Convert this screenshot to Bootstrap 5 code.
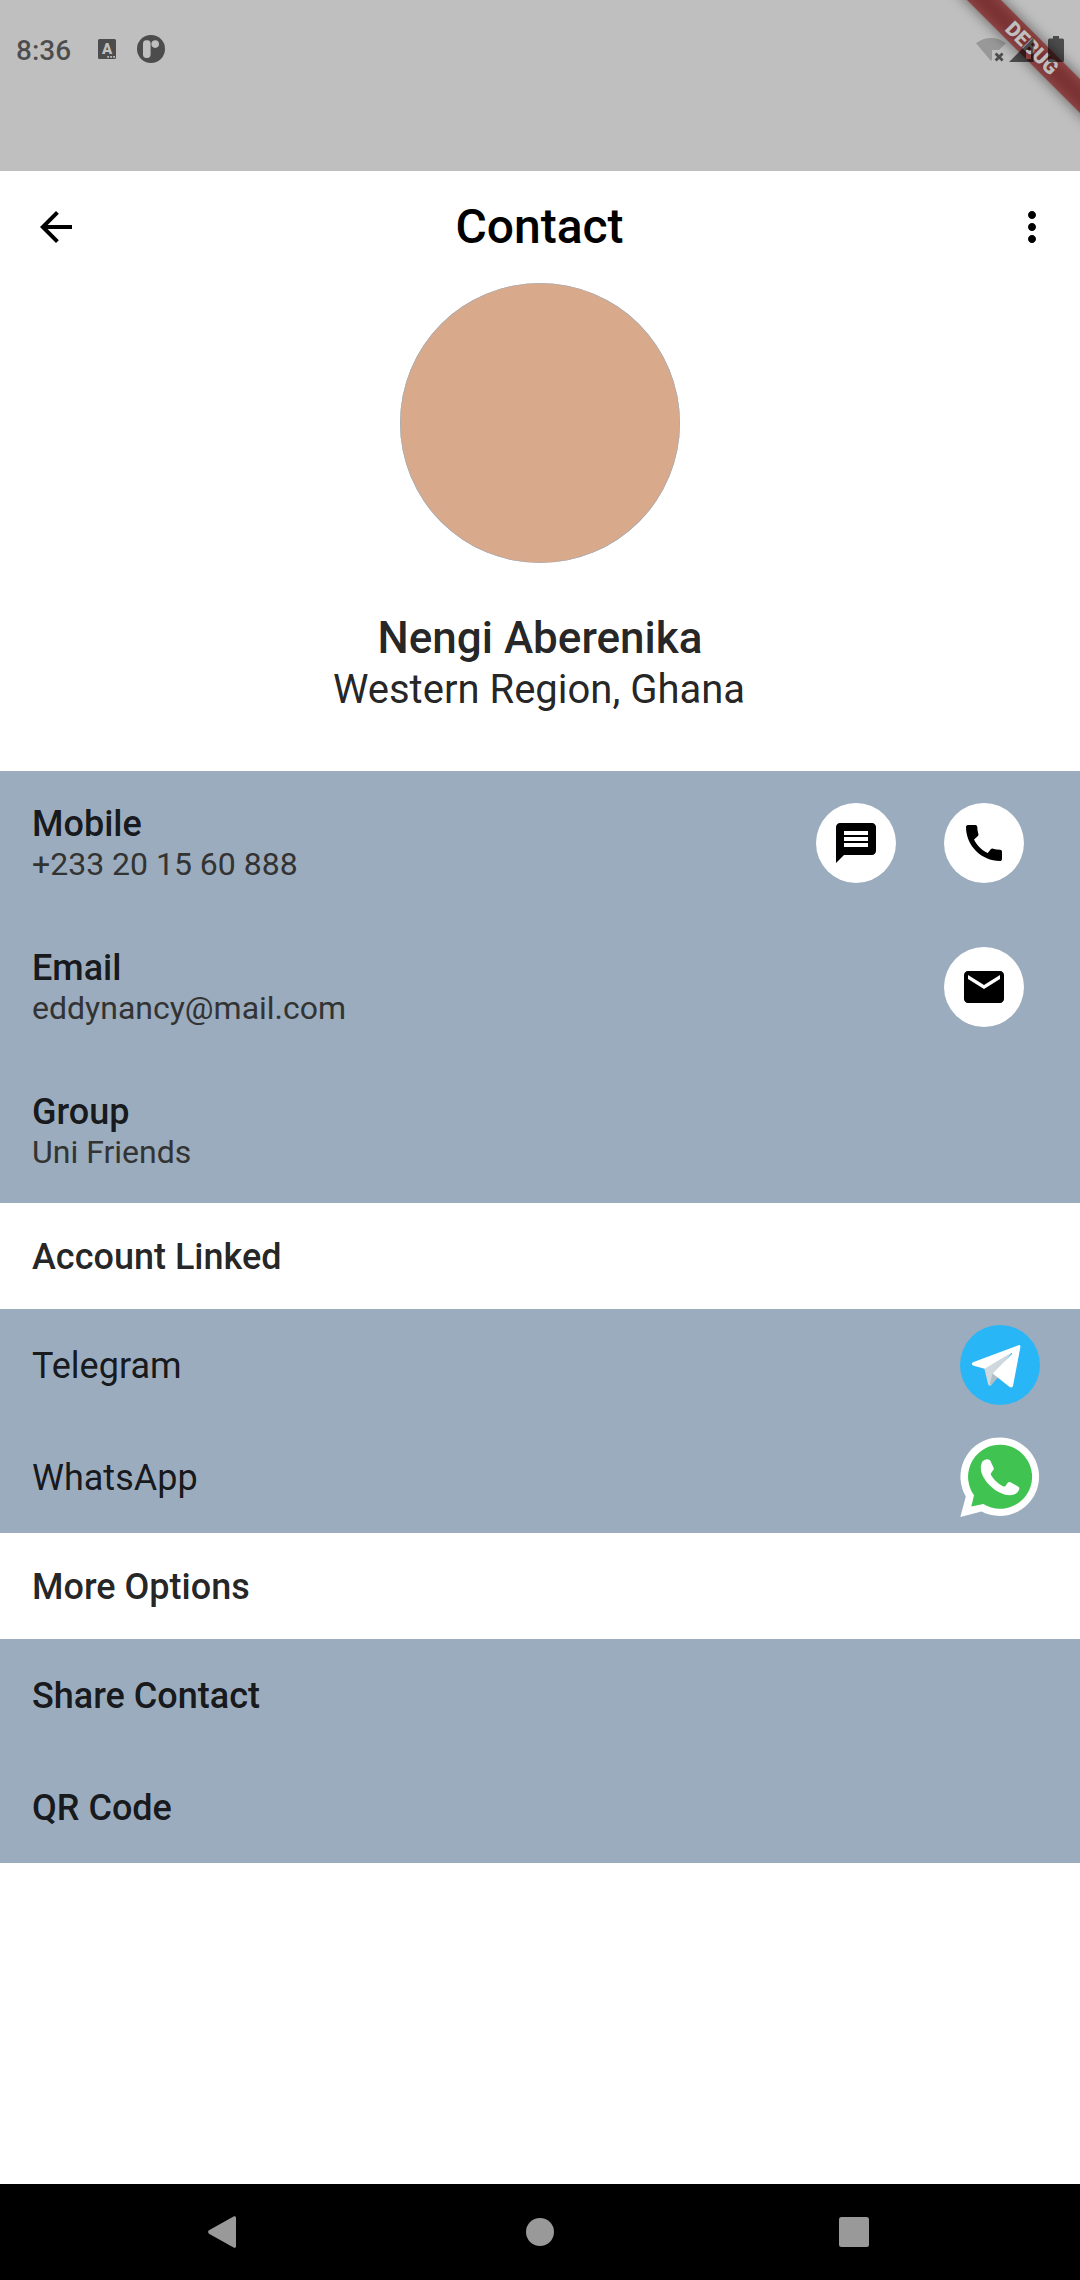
<!DOCTYPE html>
<html lang="en">
<head>
<meta charset="utf-8">
<meta name="viewport" content="width=device-width, initial-scale=1">
<title>Contact</title>
<link href="https://cdn.jsdelivr.net/npm/bootstrap@5.3.0/dist/css/bootstrap.min.css" rel="stylesheet">
<style>
  body { font-family: Roboto, "Liberation Sans", sans-serif; line-height: normal; color: rgba(0,0,0,.87); background: #fff; }
  svg { display: block; flex: none; }
  .screen { width: 1080px; height: 2280px; }
  .status-area { height: 171px; background: #fff; }
  .scrim { background: rgba(0,0,0,.25); }
  .ribbon-shade, .debug-ribbon { width: 160px; height: 24px; left: 952px; top: 36px; transform: rotate(45deg); }
  .ribbon-shade { background: rgba(0,0,0,.5); filter: blur(7px); width: 190px; left: 937px; }
  .debug-ribbon { background: rgba(183,28,28,.627); color: #fff; font-size: 20.4px; font-weight: 900; line-height: 24px; }
  .status-icons { height: 98px; padding: 0 16px; z-index: 2; color: rgba(0,0,0,.6); }
  .clock { font-size: 28px; font-weight: 500; width: 82px; padding-top: 2px; }
  .app-bar { height: 112px; padding: 0 24px 0 32px; color: #000; }
  .app-title { font-size: 48px; margin-right: 9px; padding-bottom: 2px; }
  .avatar { width: 280px; height: 280px; background: #d9a98c; box-shadow: inset 0 0 0 .6px #9aacbc; }
  .profile { height: 488px; }
  .person { font-size: 44px; line-height: 52px; margin-top: 49px; }
  .place { font-size: 40px; line-height: 47px; margin-top: 2px; padding-right: 2px; }
  .panel { background: #9aacbd; }
  .info-row { height: 144px; padding: 32px 56px 32px 32px; }
  .item-row { height: 112px; padding: 0 40px 0 32px; font-size: 36px; line-height: 42px; }
  .item-row span { padding-top: 2px; }
  .section-head { height: 106px; padding: 2px 32px 0; font-size: 36px; line-height: 42px; }
  .info-label { font-size: 36px; line-height: 42px; }
  .info-value { font-size: 32px; line-height: 38px; color: #333; }
  .round-btn { width: 80px; height: 80px; color: #000; }
  .actions { gap: 48px; }
  .medium { font-weight: 500; }
  .logo { filter: blur(.5px); }
  .notif-gap { margin-left: 21px; }
  .system-nav { height: 96px; padding: 0 211px 0 208px; background: #000; color: #999; }
</style>
</head>
<body>
<div class="screen d-flex flex-column overflow-hidden">

  <header class="status-area position-relative overflow-hidden">
    <div class="ribbon-shade position-absolute"></div>
    <div class="debug-ribbon position-absolute text-center">DEBUG</div>
    <div class="scrim position-absolute top-0 start-0 w-100 h-100"></div>
    <div class="status-icons position-relative d-flex align-items-center">
      <div class="clock">8:36</div>
      <svg width="18" height="20" viewBox="0 0 18 20"><rect width="18" height="20" rx="1.5" fill="#4c4c4c"/><text x="9" y="15" text-anchor="middle" font-family="Roboto" font-size="15" font-weight="900" fill="#bfbfbf">A</text><path d="M9.3 17h1.8v1.8H9.3zM12.3 17h1.8v1.8h-1.8zM15.2 17H17v1.8h-1.8z" fill="#bfbfbf"/></svg>
      <svg class="notif-gap" width="28" height="28" viewBox="0 0 28 28"><circle cx="14" cy="14" r="14" fill="#4c4c4c"/><rect x="6" y="5.3" width="7.6" height="17.7" rx="3.4" fill="#bfbfbf"/><circle cx="18.2" cy="9.1" r="3.8" fill="#bfbfbf"/></svg>
      <svg class="ms-auto" width="88" height="26" viewBox="0 0 88 26"><path d="M0 7.2A24 24 0 0 1 30 7.2L23 14H16v9.5L15 25Z" fill="#000" fill-opacity=".2"/><path d="M19.6 17.6l7 7M26.6 17.6l-7 7" stroke="currentColor" stroke-width="2.8"/><path fill-rule="evenodd" d="M33 26 57.500 1.500V26ZM50 14v9h5v-9Z" fill="currentColor"/><path d="M77 0h6v2.500h3.500q1.500 0 1.500 1.500V24.500q0 1.500-1.500 1.500h-13Q72 26 72 24.500V4q0-1.500 1.500-1.500H77Z" fill="currentColor"/></svg>
    </div>
  </header>

  <main class="flex-grow-1">
    <nav class="app-bar d-flex align-items-center justify-content-between">
      <svg width="48" height="48" viewBox="0 0 24 24"><path fill="currentColor" d="M20 11H7.830l5.590-5.590L12 4l-8 8 8 8 1.410-1.410L7.830 13H20v-2z"/></svg>
      <div class="app-title medium">Contact</div>
      <svg width="48" height="48" viewBox="0 0 24 24"><path fill="currentColor" d="M12 8c1.100 0 2-.9 2-2s-.9-2-2-2-2 .9-2 2 .9 2 2 2zm0 2c-1.100 0-2 .9-2 2s.9 2 2 2 2-.9 2-2-.9-2-2-2zm0 6c-1.100 0-2 .9-2 2s.9 2 2 2 2-.9 2-2-.9-2-2-2z"/></svg>
    </nav>

    <section class="profile d-flex flex-column align-items-center">
      <div class="avatar rounded-circle"></div>
      <div class="person medium">Nengi Aberenika</div>
      <div class="place">Western Region, Ghana</div>
    </section>

    <section class="panel">
      <div class="info-row d-flex justify-content-between">
        <div><div class="info-label medium">Mobile</div><div class="info-value">+233 20 15 60 888</div></div>
        <div class="actions d-flex">
          <div class="round-btn bg-white rounded-circle d-flex align-items-center justify-content-center"><svg width="48" height="48" viewBox="0 0 24 24"><path fill="currentColor" d="M20 2H4c-1.100 0-1.990.9-1.990 2L2 22l4-4h14c1.100 0 2-.9 2-2V4c0-1.100-.9-2-2-2zM6 9h12v2H6V9zm12 5H6v-2h12v2zm0-6H6V6h12v2z"/></svg></div>
          <div class="round-btn bg-white rounded-circle d-flex align-items-center justify-content-center"><svg width="48" height="48" viewBox="0 0 24 24"><path fill="currentColor" d="M20.010 15.380c-1.230 0-2.420-.2-3.530-.56-.35-.12-.74-.03-1.010.24l-1.570 1.970c-2.830-1.350-5.480-3.900-6.890-6.830l1.950-1.660c.27-.28.35-.67.24-1.020-.37-1.110-.56-2.300-.56-3.530 0-.54-.45-.99-.99-.99H4.190C3.650 3 3 3.240 3 3.990 3 13.280 10.730 21 20.010 21c.71 0 .99-.63.99-1.180v-3.450c0-.54-.45-.99-.99-.99z"/></svg></div>
        </div>
      </div>
      <div class="info-row d-flex justify-content-between">
        <div><div class="info-label medium">Email</div><div class="info-value">eddynancy@mail.com</div></div>
        <div class="round-btn bg-white rounded-circle d-flex align-items-center justify-content-center"><svg width="48" height="48" viewBox="0 0 24 24"><path fill="currentColor" d="M20 4H4c-1.100 0-1.990.9-1.990 2L2 18c0 1.100.9 2 2 2h16c1.100 0 2-.9 2-2V6c0-1.100-.9-2-2-2zm0 4l-8 5-8-5V6l8 5 8-5v2z"/></svg></div>
      </div>
      <div class="info-row">
        <div class="info-label medium">Group</div><div class="info-value">Uni Friends</div>
      </div>
    </section>

    <div class="section-head medium d-flex align-items-center">Account Linked</div>
    <section class="panel">
      <div class="item-row d-flex align-items-center justify-content-between">
        <span>Telegram</span>
        <svg class="logo" width="80" height="80" viewBox="0 0 80 80"><circle cx="40" cy="40" r="40" fill="#29b6f6"/><path d="M24 42 53 26 35 50 31.500 60Q29 62 28 59Z" fill="#cfd8dc"/><path d="M32.700 48 38 52.500 31 60.300Q29.500 60 30 58Z" fill="#b0bec5"/><path d="M13 37.300 58.500 20.200Q60.600 19.600 60.400 22L53 61Q52 63.700 49 61.500L32.700 48.500 51.500 29.500Q53 27.300 50.500 28.300L24.500 43.800 13 40.500Q10.500 38.500 13 37.300Z" fill="#fff"/></svg>
      </div>
      <div class="item-row d-flex align-items-center justify-content-between">
        <span>WhatsApp</span>
        <svg class="logo" width="80" height="80" viewBox="0 0 80 80"><path d="M.3 80 5.800 59.500A39.300 39.300 0 1 1 21.500 74.500Z" fill="#fff"/><path d="M11.300 69.500 14 58.300A32 32 0 1 1 23.300 67Z" fill="#40c351"/><path d="M22 25Q20 29 21 34C24 46 38 58 50 58.300Q57 58 59 53 60 50.500 58 49.500L51 45.500Q49 44.500 47.500 46L45.500 49Q44 50 42.500 49 35 45 31 38 30.300 36.500 31.500 35.500L33.500 32.800Q34 32 33.700 31L30.500 24Q30 22.300 27 22.200 24 22.300 22 25Z" fill="#fff"/></svg>
      </div>
    </section>

    <div class="section-head medium d-flex align-items-center">More Options</div>
    <section class="panel">
      <div class="item-row medium d-flex align-items-center"><span>Share Contact</span></div>
      <div class="item-row medium d-flex align-items-center"><span>QR Code</span></div>
    </section>
  </main>

  <footer class="system-nav d-flex align-items-center justify-content-between">
    <svg width="33" height="32" viewBox="0 0 33 32"><path d="M1 14.300 26 .300Q28-.300 28 1.700V30.300Q28 32.300 26 31.700L1 17.700Q-.800 16 1 14.300Z" fill="currentColor"/></svg>
    <svg width="28" height="28" viewBox="0 0 28 28"><circle cx="14" cy="14" r="14" fill="currentColor"/></svg>
    <svg width="30" height="30" viewBox="0 0 30 30"><rect width="30" height="30" rx="2.500" fill="currentColor"/></svg>
  </footer>
</div>
<script src="https://cdn.jsdelivr.net/npm/bootstrap@5.3.0/dist/js/bootstrap.bundle.min.js"></script>
</body>
</html>
